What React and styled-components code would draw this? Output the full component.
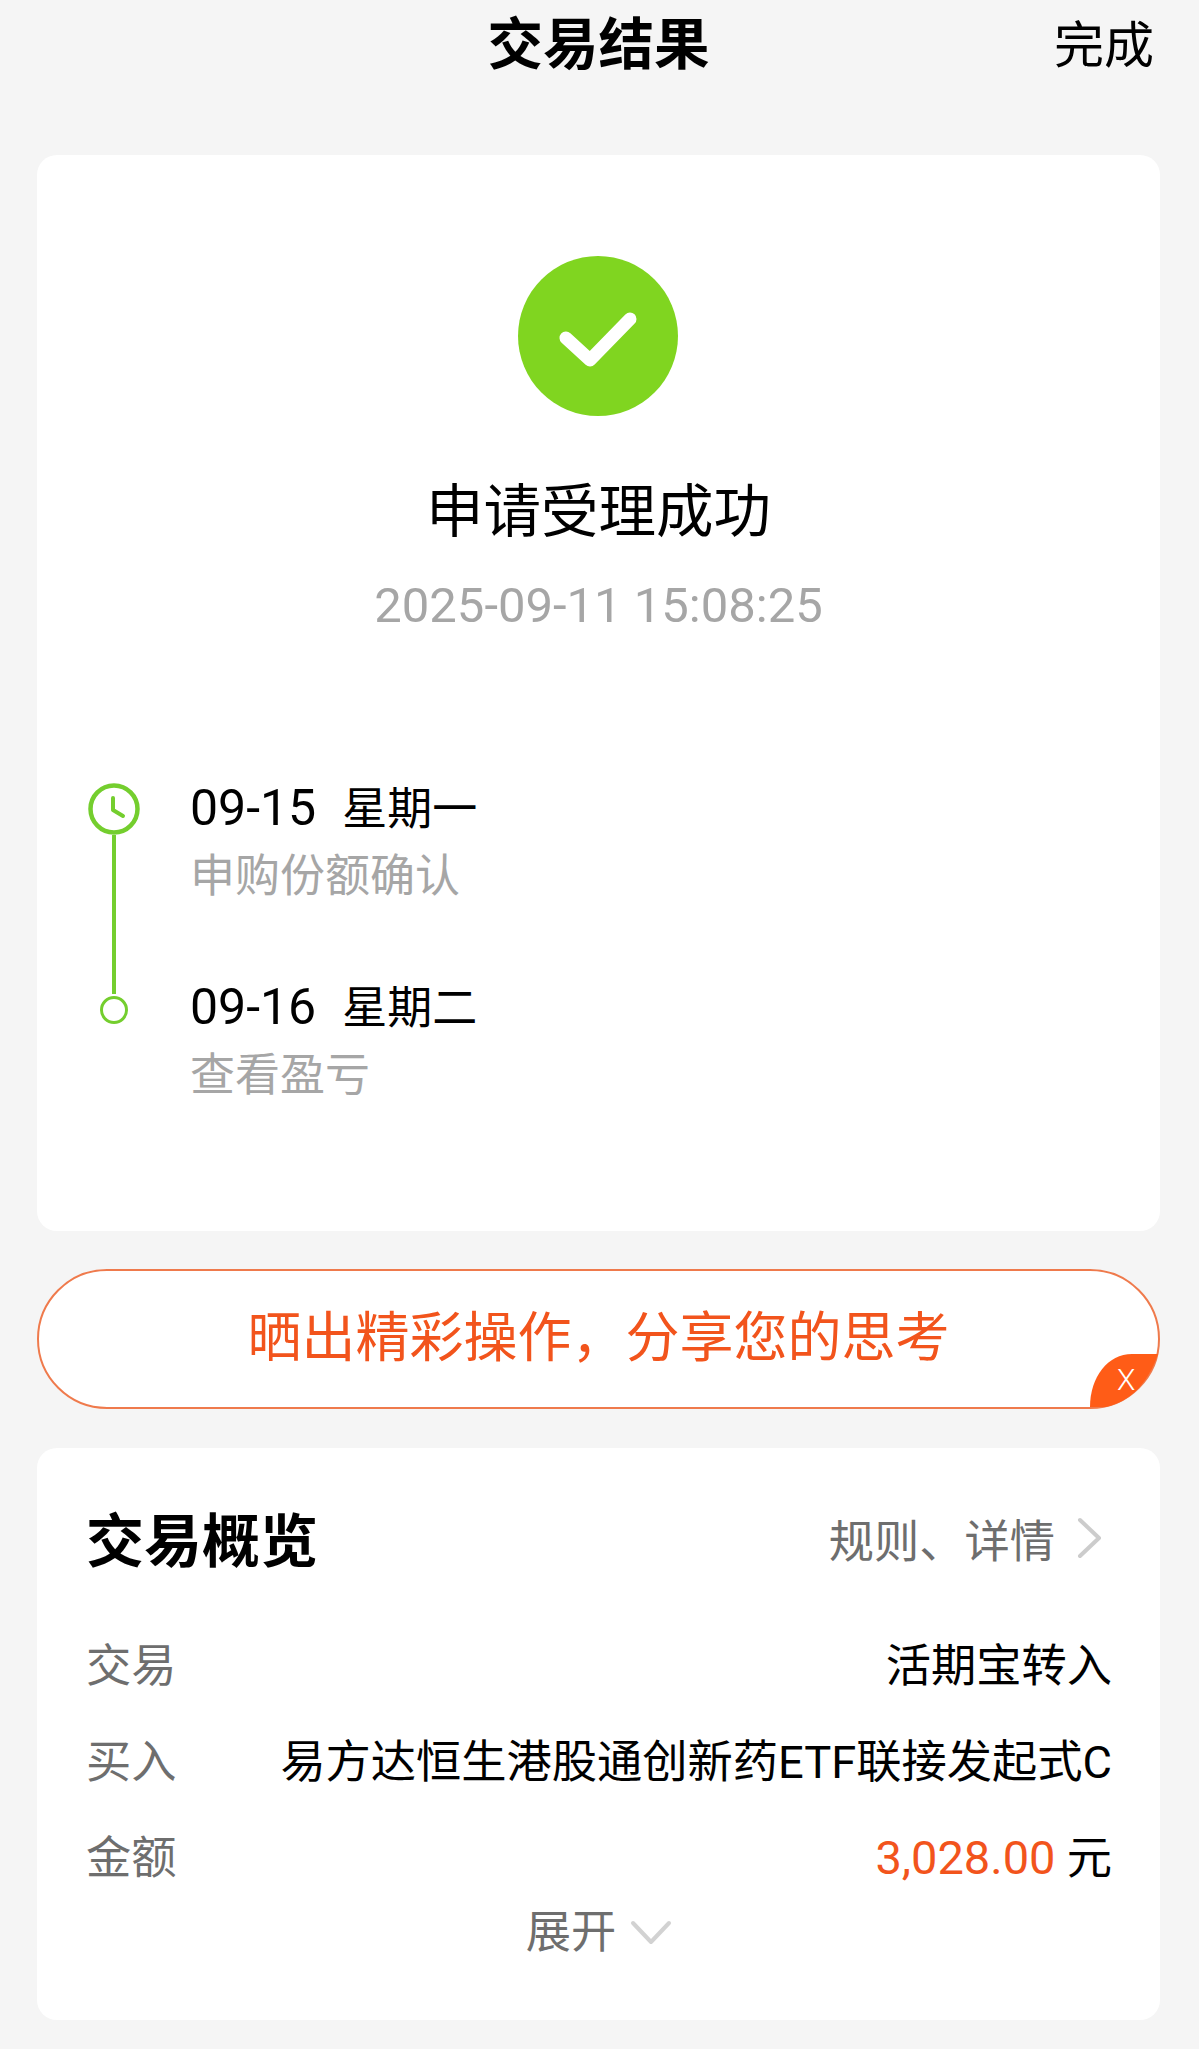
import React from "react";
import styled, { createGlobalStyle } from "styled-components";

const GlobalStyle = createGlobalStyle`
  html, body {
    margin: 0;
    padding: 0;
    background: #f5f5f5;
  }
  * { box-sizing: border-box; }
  body {
    font-family: Roboto, "Noto Sans CJK SC", sans-serif;
  }
`;

const CheckIcon = () => (
  <svg width="160" height="160" viewBox="0 0 160 160">
    <circle cx="80" cy="80" r="80" fill="#80d520" />
    <path d="M48 82 L72 104 L112 63" fill="none" stroke="#fff" strokeWidth="13" strokeLinecap="round" strokeLinejoin="round" />
  </svg>
);

const ClockIcon = () => (
  <svg width="52" height="52" viewBox="0 0 52 52">
    <circle cx="26" cy="26" r="23.5" fill="#fff" stroke="#74ce2e" strokeWidth="4.5" />
    <path d="M25 15 V27 L35 33" fill="none" stroke="#74ce2e" strokeWidth="4" strokeLinecap="round" strokeLinejoin="round" />
  </svg>
);

const App = () => {
  return (
    <Page>
      <GlobalStyle />
      <TopBar>
        <TopTitle>交易结果</TopTitle>
        <Done>完成</Done>
      </TopBar>

      <ResultCard>
        <CheckWrap>
          <CheckIcon />
        </CheckWrap>
        <ResultTitle>申请受理成功</ResultTitle>
        <ResultTime>2025-09-11 15:08:25</ResultTime>
        <Timeline>
          <Step>
            <Rail>
              <ClockIcon />
              <RailLine />
            </Rail>
            <StepText>
              <StepDate>
                <DateNum>09-15</DateNum>星期一
              </StepDate>
              <StepNote>申购份额确认</StepNote>
            </StepText>
          </Step>
          <Step $last>
            <Rail>
              <EndDot />
            </Rail>
            <StepText>
              <StepDate>
                <DateNum>09-16</DateNum>星期二
              </StepDate>
              <StepNote>查看盈亏</StepNote>
            </StepText>
          </Step>
        </Timeline>
      </ResultCard>

      <ShareBanner>
        <ShareText>晒出精彩操作，分享您的思考</ShareText>
        <CloseTab>
          <svg width="72" height="56" viewBox="0 0 72 56">
            <path d="M4 56 C4 26 22 3 46 3 L72 3 C63 30 46 50 20 56 Z" fill="#ff5c17" />
          </svg>
          <CloseMark>X</CloseMark>
        </CloseTab>
      </ShareBanner>

      <OverviewCard>
        <OverviewHead>
          <OverviewTitle>交易概览</OverviewTitle>
          <RulesLink>
            规则、详情
            <svg width="26" height="42" viewBox="0 0 26 42">
              <path d="M3 3 L22 21 L3 39" fill="none" stroke="#cccccc" strokeWidth="4" strokeLinecap="round" strokeLinejoin="round" />
            </svg>
          </RulesLink>
        </OverviewHead>
        <Row>
          <RowLabel>交易</RowLabel>
          <RowValue>活期宝转入</RowValue>
        </Row>
        <Row>
          <RowLabel>买入</RowLabel>
          <RowValue>易方达恒生港股通创新药ETF联接发起式C</RowValue>
        </Row>
        <Row>
          <RowLabel>金额</RowLabel>
          <RowValue>
            <Amount>3,028.00</Amount> 元
          </RowValue>
        </Row>
        <Expand>
          展开
          <ExpandArrow>
            <svg width="42" height="26" viewBox="0 0 42 26">
              <path d="M3 3 L21 22 L39 3" fill="none" stroke="#d2d2d2" strokeWidth="4" strokeLinecap="round" strokeLinejoin="round" />
            </svg>
          </ExpandArrow>
        </Expand>
      </OverviewCard>
    </Page>
  );
};

export default App;

const Page = styled.div`
  width: 1199px;
  height: 2049px;
  overflow: hidden;
  background: #f5f5f5;
  padding: 0 39px 0 37px;
  color: #000;
`;
const TopBar = styled.header`
  position: relative;
  height: 155px;
  display: flex;
  justify-content: center;
  padding-top: 12px;
`;
const TopTitle = styled.h1`
  margin: 0;
  height: 68px;
  font-size: 55.5px;
  line-height: 68px;
  font-weight: 700;
`;
const Done = styled.span`
  position: absolute;
  right: 6px;
  top: 12px;
  font-size: 50px;
  line-height: 68px;
`;
const ResultCard = styled.section`
  height: 1076px;
  background: #fff;
  border-radius: 20px;
  padding-top: 101px;
  display: flex;
  flex-direction: column;
  align-items: center;
`;
const CheckWrap = styled.div`
  height: 160px;
  margin-right: 2px;
`;
const ResultTitle = styled.h2`
  margin: 62px 0 0;
  font-size: 57.5px;
  line-height: 70px;
  font-weight: 400;
`;
const ResultTime = styled.div`
  margin-top: 30px;
  font-size: 49px;
  line-height: 56px;
  color: #a6a6a6;
`;
const Timeline = styled.div`
  align-self: stretch;
  margin-top: 146px;
  padding-left: 51px;
  display: flex;
  flex-direction: column;
`;
const Step = styled.div`
  display: flex;
  height: ${(p) => (p.$last ? "auto" : "199px")};
`;
const Rail = styled.div`
  width: 52px;
  margin-right: 50px;
  display: flex;
  flex-direction: column;
  align-items: center;
  padding-top: 3px;
`;
const RailLine = styled.div`
  width: 4px;
  flex: 1;
  margin-bottom: -15px;
  background: #74ce2e;
`;
const EndDot = styled.div`
  width: 28px;
  height: 28px;
  margin-top: 14px;
  border: 3px solid #74ce2e;
  border-radius: 50%;
  background: #fff;
`;
const StepText = styled.div`
  display: flex;
  flex-direction: column;
`;
const StepDate = styled.div`
  font-size: 45px;
  line-height: 56px;
  height: 56px;
`;
const DateNum = styled.span`
  font-size: 50px;
  margin-right: 26px;
`;
const StepNote = styled.div`
  margin-top: 13px;
  font-size: 45px;
  line-height: 56px;
  color: #a6a6a6;
`;
const ShareBanner = styled.div`
  position: relative;
  margin-top: 38px;
  height: 140px;
  background: #fff;
  border: 2px solid #ef7a4c;
  border-radius: 70px;
  display: flex;
  align-items: center;
  justify-content: center;
`;
const ShareText = styled.div`
  font-size: 54px;
  line-height: 70px;
  color: #f2541c;
`;
const CloseTab = styled.div`
  position: absolute;
  right: 0;
  bottom: 0;
  width: 72px;
  height: 56px;
  line-height: 0;
`;
const CloseMark = styled.span`
  position: absolute;
  left: 31px;
  top: 12px;
  font-size: 30px;
  font-weight: 300;
  line-height: 34px;
  color: #fff;
`;
const OverviewCard = styled.section`
  margin-top: 39px;
  height: 572px;
  background: #fff;
  border-radius: 20px;
  padding: 58px 48px 0 49px;
`;
const OverviewHead = styled.div`
  height: 72px;
  display: flex;
  align-items: center;
  justify-content: space-between;
  margin-bottom: 36px;
`;
const OverviewTitle = styled.h3`
  margin: 0;
  font-size: 58px;
  line-height: 72px;
  font-weight: 700;
`;
const RulesLink = styled.div`
  display: flex;
  align-items: center;
  gap: 22px;
  font-size: 45.25px;
  color: #6e6e6e;
  padding-right: 9px;
  padding-bottom: 8px;
`;
const Row = styled.div`
  display: flex;
  justify-content: space-between;
  align-items: center;
  height: 96px;
  font-size: 45.25px;
`;
const RowLabel = styled.span`
  color: #6e6e6e;
`;
const RowValue = styled.span`
  color: #000;
`;
const Amount = styled.span`
  font-size: 47px;
  color: #f2541c;
`;
const Expand = styled.div`
  display: flex;
  justify-content: center;
  align-items: center;
  gap: 14px;
  margin-top: -6px;
  font-size: 45.25px;
  color: #6e6e6e;
`;
const ExpandArrow = styled.span`
  display: flex;
  padding-top: 8px;
`;
